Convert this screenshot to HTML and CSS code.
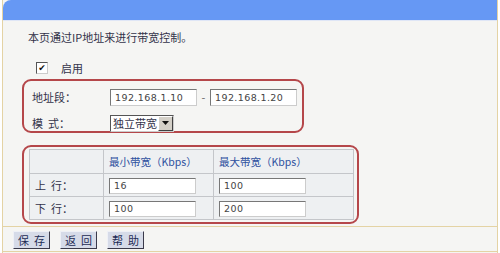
FILE: index.html
```html
<!DOCTYPE html>
<html>
<head>
<meta charset="utf-8">
<link rel="stylesheet" href="styles.css">
</head>
<body>
<div class="panel">
  <div class="header"></div>
  <div class="content">
    <p class="intro">本页通过IP地址来进行带宽控制。</p>
    <label class="enable"><span class="check">✔</span><span>启用</span></label>
    <div class="box box-addr">
      <div class="row">
        <span class="lbl">地址段：</span>
        <span class="field">192.168.1.10</span>
        <span class="dash">-</span>
        <span class="field">192.168.1.20</span>
      </div>
      <div class="row">
        <span class="lbl">模&nbsp;&nbsp;式：</span>
        <span class="select"><span class="sel-text">独立带宽</span><span class="sel-btn"><svg width="7" height="4" viewBox="0 0 7 4"><path d="M0 0h7L3.5 4z" fill="#111"/></svg></span></span>
      </div>
    </div>
    <div class="box box-bw">
      <table class="bw">
        <tr class="head"><td class="c1"></td><td class="c2">最小带宽（Kbps）</td><td class="c3">最大带宽（Kbps）</td></tr>
        <tr><td class="c1">上&nbsp;&nbsp;行：</td><td class="c2"><span class="field">16</span></td><td class="c3"><span class="field">100</span></td></tr>
        <tr><td class="c1">下&nbsp;&nbsp;行：</td><td class="c2"><span class="field">100</span></td><td class="c3"><span class="field">200</span></td></tr>
      </table>
    </div>
  </div>
  <div class="footer">
    <button class="btn">保&nbsp;&nbsp;存</button>
    <button class="btn">返&nbsp;&nbsp;回</button>
    <button class="btn">帮&nbsp;&nbsp;助</button>
  </div>
</div>
</body>
</html>
```

FILE: styles.css
```css
* { box-sizing: border-box; }
html, body { margin: 0; padding: 0; background: #fff; }
body {
  font-family: "Noto Sans CJK SC", "DejaVu Sans", sans-serif;
  font-size: 11px;
  color: #33334a;
  width: 500px;
  height: 253px;
  overflow: hidden;
}
.panel {
  margin-left: 2px;
  width: 496px;
  height: 253px;
  border-left: 1px solid #e4d3a4;
  border-right: 1px solid #e4d3a4;
  background: #f5f5f3;
  display: flex;
  flex-direction: column;
}
.header {
  height: 21px;
  background: #6698f4;
  border-radius: 8px 0 0 0;
  border-bottom: 1px solid #dfe6f6;
}
.content {
  flex: 1;
  padding: 9px 0 0 19px;
}
.intro {
  margin: 0;
  line-height: 14px;
  padding-left: 6px;
}
.enable {
  display: flex;
  align-items: center;
  gap: 13px;
  margin-top: 17px;
  padding-left: 14px;
  height: 14px;
}
.check {
  width: 12px;
  height: 12px;
  border: 1px solid #555;
  border-right-color: #ccc;
  border-bottom-color: #ccc;
  background: #fff;
  font-size: 9px;
  line-height: 10px;
  text-align: center;
  color: #111;
  font-weight: bold;
}
.box {
  border: 2px solid #b5474a;
  border-radius: 9px;
}
.box-addr {
  margin-top: 4px;
  width: 282px;
  height: 54px;
  padding: 5px 0 0 8px;
}
.row {
  display: flex;
  align-items: center;
  height: 22px;
  margin-bottom: 4px;
}
.lbl { width: 78px; }
.field {
  display: inline-block;
  width: 87px;
  height: 17px;
  background: #fff;
  border: 1px solid #777;
  border-right-color: #ccc;
  border-bottom-color: #ccc;
  padding-left: 4px;
  font-family: "DejaVu Sans", sans-serif;
  font-size: 9.5px;
  line-height: 15px;
  letter-spacing: 0.4px;
  color: #444;
}
.dash { width: 13px; text-align: center; color: #666; }
.select {
  display: inline-flex;
  width: 64px;
  height: 17px;
  border: 1px solid #555;
  border-right-color: #ccc;
  border-bottom-color: #ccc;
  background: #fff;
}
.sel-text { flex: 1; padding-left: 2px; line-height: 15px; font-size: 11px; }
.sel-btn {
  width: 15px;
  background: #d4d0c8;
  border: 1px solid #fff;
  border-right-color: #404040;
  border-bottom-color: #404040;
  display: flex;
  align-items: center;
  justify-content: center;
}
.box-bw {
  margin-top: 12px;
  width: 337px;
  height: 79px;
  padding: 2px 0 0 5px;
}
.bw {
  border-collapse: collapse;
  width: 325px;
  background: #eef0f2;
}
.bw td {
  border: 1px solid #c4c6ca;
  padding: 0 0 0 5px;
  height: 23px;
}
.bw .head td { height: 24px; color: #2d4f9e; font-size: 10.5px; }
.bw .c1 { width: 74px; }
.bw .c2 { width: 110px; }
.bw .field { width: 87px; height: 16px; line-height: 14px; }
.footer {
  height: 26px;
  border-top: 1px solid #e4d3a4;
  border-bottom: 1px solid #e4d3a4;
  display: flex;
  align-items: center;
  gap: 10px;
  padding-left: 10px;
  padding-top: 2px;
  margin-bottom: 1px;
}
.btn {
  width: 37px;
  height: 18px;
  font-family: "Noto Sans CJK SC", sans-serif;
  font-size: 11px;
  color: #1d2b55;
  background: #d6dbe8;
  border: 1px solid #eef0f6;
  border-right-color: #3a3a4a;
  border-bottom-color: #3a3a4a;
  padding: 0;
  line-height: 15px;
  white-space: nowrap;
}
```
